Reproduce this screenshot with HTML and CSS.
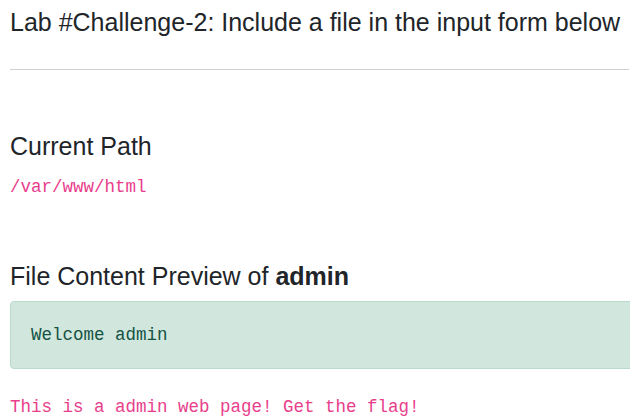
FILE: index.html
```html
<!DOCTYPE html>
<html>
<head>
<meta charset="utf-8">
<link rel="stylesheet" href="styles.css">
</head>
<body>
<div class="container">
  <h5 class="title">Lab #Challenge-2: Include a file in the input form below</h5>
  <hr class="rule">
  <h5 class="section-head">Current Path</h5>
  <code class="path">/var/www/html</code>
  <h5 class="section-head preview-head">File Content Preview of <b>admin</b></h5>
  <div class="alert">
    <code class="alert-code">Welcome admin</code>
  </div>
  <code class="flag">This is a admin web page! Get the flag!</code>
</div>
</body>
</html>
```

FILE: styles.css
```css
html, body {
  margin: 0;
  padding: 0;
  background: #fff;
  overflow: hidden;
}
body {
  font-family: "Liberation Sans", Arial, sans-serif;
  color: #212529;
  width: 630px;
  height: 417px;
}
.container {
  width: 700px;
  padding-left: 10px;
  box-sizing: border-box;
}
h5 {
  font-size: 25px;
  font-weight: 400;
  line-height: 1.2;
  margin: 0;
}
h5 b {
  font-weight: 700;
}
.title {
  padding-top: 7px;
}
.rule {
  border: 0;
  border-top: 1px solid #d0d0d0;
  margin: 32px 0 0 0;
  width: 619px;
}
.section-head {
  margin-top: 61px;
}
code {
  font-family: "Liberation Mono", "DejaVu Sans Mono", monospace;
  font-size: 17.5px;
  color: #e83e8c;
  display: block;
}
.path {
  margin-top: 16px;
}
.preview-head {
  margin-top: 64px;
}
.alert {
  margin-top: 10px;
  background: #d1e7dd;
  border: 1px solid #badbcc;
  border-radius: 4px;
  height: 66px;
  display: flex;
  align-items: center;
  padding-left: 20px;
  width: 700px;
}
.alert-code {
  color: #155244;
}
.flag {
  margin-top: 28px;
}
```
